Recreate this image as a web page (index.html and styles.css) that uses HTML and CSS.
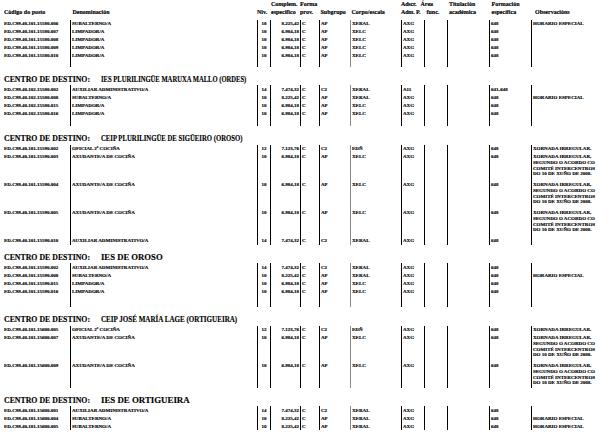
FILE: index.html
```html
<!DOCTYPE html>
<html lang="gl">
<head>
<meta charset="utf-8">
<title>Relación de postos</title>
<link rel="stylesheet" href="styles.css">
</head>
<body>
<div class="doc">
  <div class="head grid">
    <div class="h c1"><br>Código do posto</div>
    <div class="h c2"><br>Denominación</div>
    <div class="h c3"><br>Niv.</div>
    <div class="h c4">Complem.<br>específico</div>
    <div class="h c5">Forma<br>prov.</div>
    <div class="h c6"><br>Subgrupo</div>
    <div class="h c7"><br>Corpo/escala</div>
    <div class="h c8">Adscr.<br>Adm. P.</div>
    <div class="h c9"><span class="area">Área</span><br>func.</div>
    <div class="h c10">Titulación<br>académica</div>
    <div class="h c11">Formación<br>específica</div>
    <div class="h c12"><br>Observacións</div>
  </div>

  <div class="block first">
    <div class="row grid"><div class="c1">ED.C99.40.101.15580.006</div><div class="c2">SUBALTERNO/A</div><div class="c3">10</div><div class="c4">8.225,42</div><div class="c5">C</div><div class="c6">AP</div><div class="c7">XERAL</div><div class="c8">AXG</div><div class="c9"></div><div class="c10"></div><div class="c11">648</div><div class="c12">HORARIO ESPECIAL</div></div>
    <div class="row grid"><div class="c1">ED.C99.40.101.15580.007</div><div class="c2">LIMPADOR/A</div><div class="c3">10</div><div class="c4">6.984,18</div><div class="c5">C</div><div class="c6">AP</div><div class="c7">XELC</div><div class="c8">AXG</div><div class="c9"></div><div class="c10"></div><div class="c11">648</div><div class="c12"></div></div>
    <div class="row grid"><div class="c1">ED.C99.40.101.15580.008</div><div class="c2">LIMPADOR/A</div><div class="c3">10</div><div class="c4">6.984,18</div><div class="c5">C</div><div class="c6">AP</div><div class="c7">XELC</div><div class="c8">AXG</div><div class="c9"></div><div class="c10"></div><div class="c11">648</div><div class="c12"></div></div>
    <div class="row grid"><div class="c1">ED.C99.40.101.15580.009</div><div class="c2">LIMPADOR/A</div><div class="c3">10</div><div class="c4">6.984,18</div><div class="c5">C</div><div class="c6">AP</div><div class="c7">XELC</div><div class="c8">AXG</div><div class="c9"></div><div class="c10"></div><div class="c11">648</div><div class="c12"></div></div>
    <div class="row grid"><div class="c1">ED.C99.40.101.15580.010</div><div class="c2">LIMPADOR/A</div><div class="c3">10</div><div class="c4">6.984,18</div><div class="c5">C</div><div class="c6">AP</div><div class="c7">XELC</div><div class="c8">AXG</div><div class="c9"></div><div class="c10"></div><div class="c11">648</div><div class="c12"></div></div>
    <div class="row tail t7 grid"><div class="c1"></div><div class="c2"></div><div class="c3"></div><div class="c4"></div><div class="c5"></div><div class="c6"></div><div class="c7"></div><div class="c8"></div><div class="c9"></div><div class="c10"></div><div class="c11"></div><div class="c12"></div></div>
  </div>

  <h2 class="centro"><span class="rotulo">CENTRO DE DESTINO:</span> <span class="nome fit-maruxa">IES PLURILINGÜE MARUXA MALLO (ORDES)</span></h2>
  <div class="block">
    <div class="row grid"><div class="c1">ED.C99.40.102.15580.002</div><div class="c2">AUXILIAR ADMINISTRATIVO/A</div><div class="c3">14</div><div class="c4">7.474,32</div><div class="c5">C</div><div class="c6">C2</div><div class="c7">XERAL</div><div class="c8">A11</div><div class="c9"></div><div class="c10"></div><div class="c11">641-648</div><div class="c12"></div></div>
    <div class="row grid"><div class="c1">ED.C99.40.102.15580.008</div><div class="c2">SUBALTERNO/A</div><div class="c3">10</div><div class="c4">8.225,42</div><div class="c5">C</div><div class="c6">AP</div><div class="c7">XERAL</div><div class="c8">AXG</div><div class="c9"></div><div class="c10"></div><div class="c11">648</div><div class="c12">HORARIO ESPECIAL</div></div>
    <div class="row grid"><div class="c1">ED.C99.40.102.15580.015</div><div class="c2">LIMPADOR/A</div><div class="c3">10</div><div class="c4">6.984,18</div><div class="c5">C</div><div class="c6">AP</div><div class="c7">XELC</div><div class="c8">AXG</div><div class="c9"></div><div class="c10"></div><div class="c11">648</div><div class="c12"></div></div>
    <div class="row grid"><div class="c1">ED.C99.40.102.15580.016</div><div class="c2">LIMPADOR/A</div><div class="c3">10</div><div class="c4">6.984,18</div><div class="c5">C</div><div class="c6">AP</div><div class="c7">XELC</div><div class="c8">AXG</div><div class="c9"></div><div class="c10"></div><div class="c11">648</div><div class="c12"></div></div>
    <div class="row tail t9 grid"><div class="c1"></div><div class="c2"></div><div class="c3"></div><div class="c4"></div><div class="c5"></div><div class="c6"></div><div class="c7"></div><div class="c8"></div><div class="c9"></div><div class="c10"></div><div class="c11"></div><div class="c12"></div></div>
  </div>

  <h2 class="centro"><span class="rotulo">CENTRO DE DESTINO:</span> <span class="nome fit-sigueiro">CEIP PLURILINGÜE DE SIGÜEIRO (OROSO)</span></h2>
  <div class="block">
    <div class="row grid"><div class="c1">ED.C99.40.101.15590.002</div><div class="c2">OFICIAL 2ª COCIÑA</div><div class="c3">12</div><div class="c4">7.123,76</div><div class="c5">C</div><div class="c6">C2</div><div class="c7">EDÑ</div><div class="c8">AXG</div><div class="c9"></div><div class="c10"></div><div class="c11">648</div><div class="c12">XORNADA IRREGULAR.</div></div>
    <div class="row tall grid"><div class="c1">ED.C99.40.101.15590.003</div><div class="c2">AXUDANTE/A DE COCIÑA</div><div class="c3">10</div><div class="c4">6.984,18</div><div class="c5">C</div><div class="c6">AP</div><div class="c7">XELC</div><div class="c8">AXG</div><div class="c9"></div><div class="c10"></div><div class="c11">648</div><div class="c12 obs">XORNADA IRREGULAR, SEGUNDO O ACORDO CO COMITÉ INTERCENTROS DO 10 DE XUÑO DE 2008.</div></div>
    <div class="row tall grid"><div class="c1">ED.C99.40.101.15590.004</div><div class="c2">AXUDANTE/A DE COCIÑA</div><div class="c3">10</div><div class="c4">6.984,18</div><div class="c5">C</div><div class="c6">AP</div><div class="c7">XELC</div><div class="c8">AXG</div><div class="c9"></div><div class="c10"></div><div class="c11">648</div><div class="c12 obs">XORNADA IRREGULAR, SEGUNDO O ACORDO CO COMITÉ INTERCENTROS DO 10 DE XUÑO DE 2008.</div></div>
    <div class="row tall grid"><div class="c1">ED.C99.40.101.15590.005</div><div class="c2">AXUDANTE/A DE COCIÑA</div><div class="c3">10</div><div class="c4">6.984,18</div><div class="c5">C</div><div class="c6">AP</div><div class="c7">XELC</div><div class="c8">AXG</div><div class="c9"></div><div class="c10"></div><div class="c11">648</div><div class="c12 obs">XORNADA IRREGULAR, SEGUNDO O ACORDO CO COMITÉ INTERCENTROS DO 10 DE XUÑO DE 2008.</div></div>
    <div class="row grid"><div class="c1">ED.C99.40.101.15590.010</div><div class="c2">AUXILIAR ADMINISTRATIVO/A</div><div class="c3">14</div><div class="c4">7.474,32</div><div class="c5">C</div><div class="c6">C2</div><div class="c7">XERAL</div><div class="c8">AXG</div><div class="c9"></div><div class="c10"></div><div class="c11">648</div><div class="c12"></div></div>
  </div>

  <h2 class="centro"><span class="rotulo">CENTRO DE DESTINO:</span> <span class="nome fit-oroso">IES DE OROSO</span></h2>
  <div class="block">
    <div class="row grid"><div class="c1">ED.C99.40.101.15590.002</div><div class="c2">AUXILIAR ADMINISTRATIVO/A</div><div class="c3">14</div><div class="c4">7.474,32</div><div class="c5">C</div><div class="c6">C2</div><div class="c7">XERAL</div><div class="c8">AXG</div><div class="c9"></div><div class="c10"></div><div class="c11">648</div><div class="c12"></div></div>
    <div class="row grid"><div class="c1">ED.C99.40.101.15590.008</div><div class="c2">SUBALTERNO/A</div><div class="c3">10</div><div class="c4">8.225,42</div><div class="c5">C</div><div class="c6">AP</div><div class="c7">XERAL</div><div class="c8">AXG</div><div class="c9"></div><div class="c10"></div><div class="c11">648</div><div class="c12">HORARIO ESPECIAL</div></div>
    <div class="row grid"><div class="c1">ED.C99.40.101.15590.015</div><div class="c2">LIMPADOR/A</div><div class="c3">10</div><div class="c4">6.984,18</div><div class="c5">C</div><div class="c6">AP</div><div class="c7">XELC</div><div class="c8">AXG</div><div class="c9"></div><div class="c10"></div><div class="c11">648</div><div class="c12"></div></div>
    <div class="row grid"><div class="c1">ED.C99.40.101.15590.016</div><div class="c2">LIMPADOR/A</div><div class="c3">10</div><div class="c4">6.984,18</div><div class="c5">C</div><div class="c6">AP</div><div class="c7">XELC</div><div class="c8">AXG</div><div class="c9"></div><div class="c10"></div><div class="c11">648</div><div class="c12"></div></div>
    <div class="row tail t12 grid"><div class="c1"></div><div class="c2"></div><div class="c3"></div><div class="c4"></div><div class="c5"></div><div class="c6"></div><div class="c7"></div><div class="c8"></div><div class="c9"></div><div class="c10"></div><div class="c11"></div><div class="c12"></div></div>
  </div>

  <h2 class="centro"><span class="rotulo">CENTRO DE DESTINO:</span> <span class="nome fit-lage">CEIP JOSÉ MARÍA LAGE (ORTIGUEIRA)</span></h2>
  <div class="block">
    <div class="row grid"><div class="c1">ED.C99.40.101.15600.005</div><div class="c2">OFICIAL 2ª COCIÑA</div><div class="c3">12</div><div class="c4">7.123,76</div><div class="c5">C</div><div class="c6">C2</div><div class="c7">EDÑ</div><div class="c8">AXG</div><div class="c9"></div><div class="c10"></div><div class="c11">648</div><div class="c12">XORNADA IRREGULAR.</div></div>
    <div class="row tall grid"><div class="c1">ED.C99.40.101.15600.007</div><div class="c2">AXUDANTE/A DE COCIÑA</div><div class="c3">10</div><div class="c4">6.984,18</div><div class="c5">C</div><div class="c6">AP</div><div class="c7">XELC</div><div class="c8">AXG</div><div class="c9"></div><div class="c10"></div><div class="c11">648</div><div class="c12 obs">XORNADA IRREGULAR, SEGUNDO O ACORDO CO COMITÉ INTERCENTROS DO 10 DE XUÑO DE 2008.</div></div>
    <div class="row tall last grid"><div class="c1">ED.C99.40.101.15600.009</div><div class="c2">AXUDANTE/A DE COCIÑA</div><div class="c3">10</div><div class="c4">6.984,18</div><div class="c5">C</div><div class="c6">AP</div><div class="c7">XELC</div><div class="c8">AXG</div><div class="c9"></div><div class="c10"></div><div class="c11">648</div><div class="c12 obs">XORNADA IRREGULAR, SEGUNDO O ACORDO CO COMITÉ INTERCENTROS DO 10 DE XUÑO DE 2008.</div></div>
  </div>

  <h2 class="centro"><span class="rotulo">CENTRO DE DESTINO:</span> <span class="nome fit-ortigueira">IES DE ORTIGUEIRA</span></h2>
  <div class="block">
    <div class="row grid"><div class="c1">ED.C99.40.101.15600.001</div><div class="c2">AUXILIAR ADMINISTRATIVO/A</div><div class="c3">14</div><div class="c4">7.474,32</div><div class="c5">C</div><div class="c6">C2</div><div class="c7">XERAL</div><div class="c8">AXG</div><div class="c9"></div><div class="c10"></div><div class="c11">648</div><div class="c12"></div></div>
    <div class="row grid"><div class="c1">ED.C99.40.101.15600.004</div><div class="c2">SUBALTERNO/A</div><div class="c3">10</div><div class="c4">8.225,42</div><div class="c5">C</div><div class="c6">AP</div><div class="c7">XERAL</div><div class="c8">AXG</div><div class="c9"></div><div class="c10"></div><div class="c11">648</div><div class="c12">HORARIO ESPECIAL</div></div>
    <div class="row grid"><div class="c1">ED.C99.40.101.15600.005</div><div class="c2">SUBALTERNO/A</div><div class="c3">10</div><div class="c4">8.225,42</div><div class="c5">C</div><div class="c6">AP</div><div class="c7">XERAL</div><div class="c8">AXG</div><div class="c9"></div><div class="c10"></div><div class="c11">648</div><div class="c12">HORARIO ESPECIAL</div></div>
  </div>
</div>
</body>
</html>
```
FILE: styles.css
```css
html, body {
  margin: 0;
  padding: 0;
  background: #ffffff;
}
body {
  width: 616px;
  height: 439px;
  overflow: hidden;
  color: #000000;
  font-family: "Liberation Serif", "Times New Roman", serif;
  font-weight: bold;
  -webkit-text-stroke: 0.15px #000000;
}
.doc {
  display: flex;
  flex-direction: column;
}
.grid {
  display: grid;
  grid-template-columns: 70px 187px 13px 30px 19px 31px 51px 23px 23px 42px 42px 85px;
}
.head {
  font-size: 6px;
  line-height: 7.6px;
  padding-top: 1px;
}
.head .h {
  white-space: nowrap;
}
.head .c1 { padding-left: 4px; }
.head .c2 { padding-left: 2.5px; }
.head .c4 { padding-left: 1px; }
.head .c6 { padding-left: 1.5px; }
.head .c7 { padding-left: 1.5px; }
.head .c8 { letter-spacing: -0.15px; }
.head .c9 { padding-left: 2.5px; }
.head .c9 .area { margin-left: -6px; }
.head .c10 { padding-left: 2px; }
.head .c11 { padding-left: 2.5px; }
.head .c12 { padding-left: 4px; }

.block {
  font-size: 5px;
  line-height: 5.7px;
  margin-top: 1.5px;
}
.block.first {
  margin-top: 3.8px;
}
.row {
  height: 8px;
}
.row.tall {
  height: 28px;
}
.row.tall.last {
  height: 26px;
}
.row.tail.t7 { height: 7px; }
.row.tail.t9 { height: 9px; }
.row.tail.t12 { height: 12px; }
.row > div {
  padding-top: 1.2px;
  white-space: nowrap;
  overflow: hidden;
  border-left: 1px solid #000000;
  padding-left: 1px;
}
.row > .c1 {
  border-left: none;
  padding-left: 4px;
}
.row > .c3 {
  text-align: center;
  padding-left: 0;
}
.row > .c4 {
  text-align: right;
  padding-right: 1px;
}
.row > .c7 {
  border-left: 1.5px solid #8c8c8c;
}
.row > .c12.obs {
  white-space: normal;
  width: 66px;
}
.centro {
  display: flex;
  margin: 0;
  padding: 8px 0 0 4px;
  font-family: "Liberation Serif", "Times New Roman", serif;
  font-size: 8.5px;
  line-height: 9px;
  font-weight: bold;
  white-space: nowrap;
}
.centro .rotulo {
  flex: none;
  width: 97px;
  transform: scaleX(0.92);
  transform-origin: 0 50%;
}
.centro .nome {
  flex: none;
  transform-origin: 0 50%;
}
.nome.fit-maruxa { transform: scaleX(0.775); }
.nome.fit-sigueiro { transform: scaleX(0.79); }
.nome.fit-oroso { transform: scaleX(1.02); }
.nome.fit-lage { transform: scaleX(0.83); }
.nome.fit-ortigueira { transform: scaleX(1.04); }
```
